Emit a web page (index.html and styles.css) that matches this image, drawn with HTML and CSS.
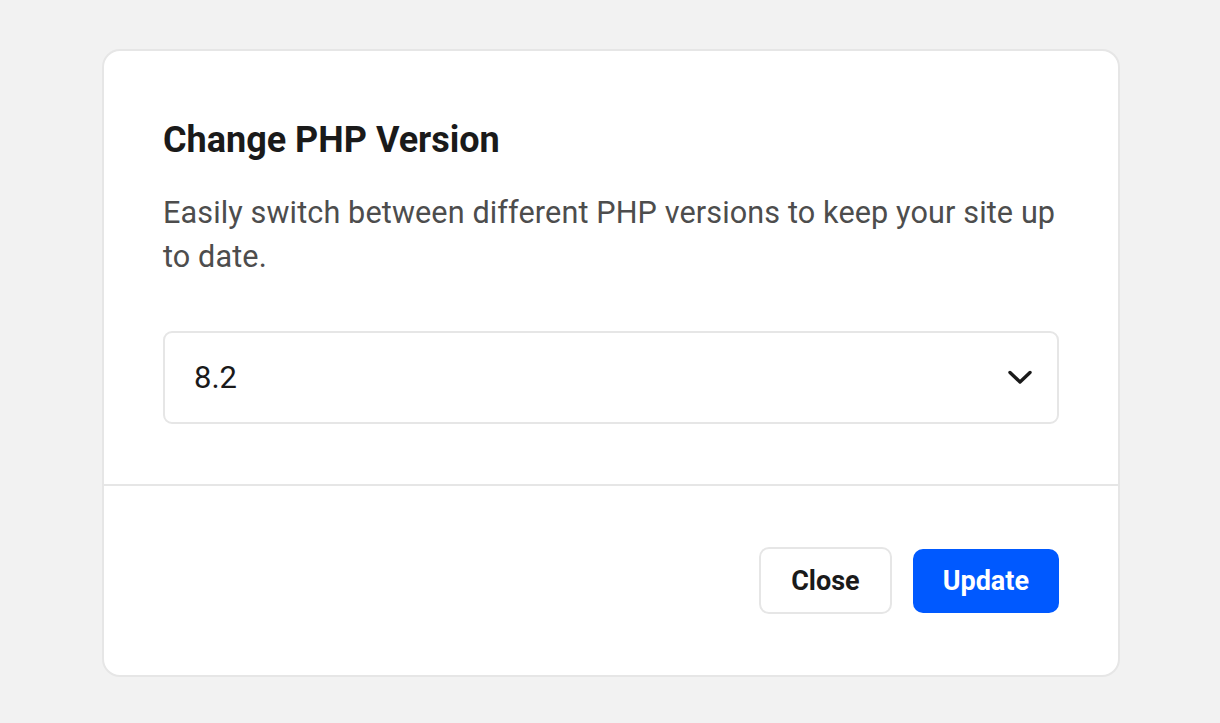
FILE: index.html
```html
<!DOCTYPE html>
<html lang="en">
<head>
    <meta charset="UTF-8">
    <meta name="viewport" content="width=device-width, initial-scale=1.0">
    <title>Change PHP Version</title>
    <link rel="stylesheet" href="styles.css">
</head>
<body>
    <div class="modal">
        <div class="modal-body">
            <h2 class="modal-title">Change PHP Version</h2>
            <p class="modal-text">Easily switch between different PHP versions to keep your site up to date.</p>
            <div class="select">
                <span class="select-value">8.2</span>
                <svg class="select-arrow" width="26" height="24" viewBox="0 0 26 24">
                    <path d="M3 6.5 L13 16 L23 6.5" fill="none" stroke="#1a1a1a" stroke-width="3.4" stroke-linecap="round" stroke-linejoin="round"/>
                </svg>
            </div>
        </div>
        <div class="modal-footer">
            <button class="btn btn-light">Close</button>
            <button class="btn btn-primary">Update</button>
        </div>
    </div>
</body>
</html>
```

FILE: styles.css
```css
body {
    margin: 0;
    background-color: #f2f2f2;
    font-family: Roboto, "Liberation Sans", sans-serif;
}
.modal {
    width: 1014px;
    margin: 49px 0 0 102px;
    background-color: #fff;
    border: 2px solid #e6e6e6;
    border-radius: 18px;
}
.modal-body {
    padding: 67px 59px 60px;
}
.modal-title {
    margin: 0;
    font-size: 36px;
    line-height: 44px;
    font-weight: 700;
    color: #1a1a1a;
}
.modal-text {
    margin: 29px 0 0;
    font-size: 30.6px;
    line-height: 44px;
    letter-spacing: 0.12px;
    color: #4d4d4d;
}
.select {
    display: flex;
    align-items: center;
    justify-content: space-between;
    height: 89px;
    margin-top: 52px;
    padding: 0 24px 0 29px;
    border: 2px solid #e6e6e6;
    border-radius: 9px;
}
.select-value {
    font-size: 31px;
    color: #1a1a1a;
}
.modal-footer {
    display: flex;
    align-items: center;
    justify-content: flex-end;
    gap: 21px;
    padding: 61px 59px 61px;
    border-top: 2px solid #e6e6e6;
}
.btn {
    padding: 0 30px;
    font-family: Roboto, "Liberation Sans", sans-serif;
    font-size: 27px;
    font-weight: 700;
    border-radius: 10px;
    cursor: pointer;
}
.btn-light {
    height: 67px;
    background-color: #fff;
    color: #1a1a1a;
    border: 2px solid #e6e6e6;
}
.btn-primary {
    height: 64px;
    background-color: #0059ff;
    color: #fff;
    border: none;
}
```
